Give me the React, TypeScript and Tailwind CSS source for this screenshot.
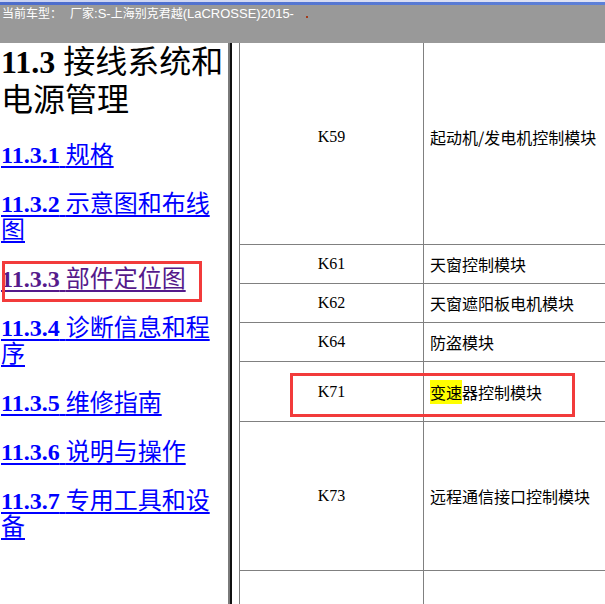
import React from 'react';

const links = [
    { num: '11.3.1', text: '规格' },
    { num: '11.3.2', text: '示意图和布线图' },
    { num: '11.3.3', text: '部件定位图', visited: true },
    { num: '11.3.4', text: '诊断信息和程序' },
    { num: '11.3.5', text: '维修指南' },
    { num: '11.3.6', text: '说明与操作' },
    { num: '11.3.7', text: '专用工具和设备' },
];

const rows = [
    { code: 'K59', name: '起动机/发电机控制模块', h: 'h-[216px]' },
    { code: 'K61', name: '天窗控制模块', h: 'h-[39px]' },
    { code: 'K62', name: '天窗遮阳板电机模块', h: 'h-[39px]' },
    { code: 'K64', name: '防盗模块', h: 'h-[39px]' },
    { code: 'K71', name: 'highlight', h: 'h-[60px]' },
    { code: 'K73', name: '远程通信接口控制模块', h: 'h-[149px]' },
    { code: 'K74', name: '座椅加热控制模块', h: 'h-[84px]' },
];

export default function App() {
    return (
        <div className="relative w-[605px] h-[604px] overflow-hidden bg-white flex flex-col">
            {/* window strip + header */}
            <div className="h-[2px] bg-gradient-to-r from-[#c9d2f2] to-[#dfe3f5]" />
            <div className="h-[3px] bg-gradient-to-r from-[#4c6ccc] to-[#5d80d8]" />
            <div className="h-[38px] bg-[#999999] flex items-start pt-[1px] pl-[2px] text-white font-['Liberation_Sans','Noto_Sans_CJK_SC',sans-serif]">
                <span className="text-[12px] leading-[16px]">当前车型：</span>
                <span className="w-[8px]" />
                <span className="text-[12px] leading-[16px]">厂家</span>
                <span className="text-[13px] leading-[16px]">:S-</span>
                <span className="text-[12px] leading-[16px]">上海别克君越</span>
                <span className="text-[13px] leading-[16px]">(LaCROSSE)2015-</span>
                <span className="ml-[12px] mt-[10px] w-[2px] h-[2px] bg-[#a33a1a]" />
            </div>

            <div className="flex flex-1 min-h-0">
                {/* left nav */}
                <div className="w-[228px] pl-[1px] font-['Liberation_Serif','Noto_Sans_CJK_SC',serif]">
                    <h1 className="text-[32px] leading-[38px] text-black font-normal">
                        <b>11.3</b> 接线系统和电源管理
                    </h1>
                    <div className="mt-[23px] flex flex-col gap-[23px]">
                        {links.map(l => (
                            <a
                                key={l.num}
                                href="#"
                                className={`block text-[24px] leading-[26px] underline underline-offset-[3px] ${l.visited ? 'text-[#551a8b]' : 'text-[#0000ff]'}`}
                            >
                                <b>{l.num}</b> {l.text}
                            </a>
                        ))}
                    </div>
                </div>

                {/* frame separator */}
                <div className="w-[2px] bg-[#7a7a7a]" />
                <div className="w-[2px] bg-[#111111]" />

                {/* right table */}
                <div className="flex-1 overflow-hidden pl-[7px]">
                    <div className="-mt-[15px] w-[420px] border-l border-t border-[#808080]">
                        {rows.map(r => (
                            <div key={r.code} className={`flex ${r.h} border-b border-[#808080]`}>
                                <div className="w-[184px] border-r border-[#808080] flex items-center justify-center font-['Liberation_Serif',serif] text-[16px] text-black">
                                    {r.code}
                                </div>
                                <div className="flex-1 flex items-center pl-[6px] font-['Noto_Sans_CJK_SC',sans-serif] text-[16px] text-black">
                                    {r.name === 'highlight' ? (
                                        <span>
                                            <span className="bg-[#ffff00]">变速</span>器控制模块
                                        </span>
                                    ) : (
                                        r.name
                                    )}
                                </div>
                            </div>
                        ))}
                    </div>
                </div>
            </div>

            {/* red markup boxes */}
            <div className="absolute left-[2px] top-[261px] w-[200px] h-[41px] border-[3px] border-[#f23b3b]" />
            <div className="absolute left-[290px] top-[373px] w-[285px] h-[44px] border-[3px] border-[#f23b3b]" />
        </div>
    );
}
